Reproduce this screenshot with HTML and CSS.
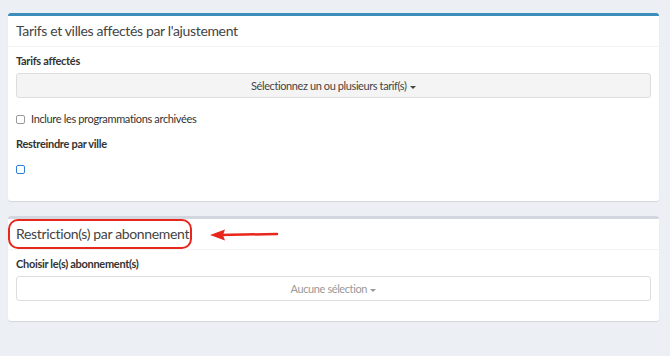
FILE: index.html
```html
<!DOCTYPE html>
<html lang="fr">
<head>
    <meta charset="UTF-8" />
    <title>Ajustement</title>
    <link rel="stylesheet" href="styles.css">
</head>
<body>
    <div class="box box-primary">
        <div class="box-header">
            <h3 class="box-title">Tarifs et villes affectés par l'ajustement</h3>
        </div>
        <div class="box-body">
            <div class="form-group">
                <label class="control-label">Tarifs affectés</label>
                <div class="picker picker-filled">Sélectionnez un ou plusieurs tarif(s) <span class="caret"></span></div>
            </div>
            <div class="check-row">
                <span class="check"></span>
                <span>Inclure les programmations archivées</span>
            </div>
            <div class="form-group">
                <label class="control-label">Restreindre par ville</label>
                <div class="check-wrap"><span class="check check-focus"></span></div>
            </div>
        </div>
    </div>

    <div class="box box-default">
        <div class="box-header">
            <h3 class="box-title">Restriction(s) par abonnement</h3>
            <span class="annot-ring"></span>
            <svg class="annot-arrow" width="70" height="14" viewBox="0 0 70 14">
                <line x1="10" y1="7" x2="68" y2="6" stroke="#e8271c" stroke-width="2.5" stroke-linecap="round"/>
                <polygon points="1,7 16,1.5 14,7 16,12.5" fill="#e8271c"/>
            </svg>
        </div>
        <div class="box-body">
            <div class="form-group">
                <label class="control-label">Choisir le(s) abonnement(s)</label>
                <div class="picker picker-muted">Aucune sélection <span class="caret"></span></div>
            </div>
        </div>
    </div>
</body>
</html>
```

FILE: styles.css
```css
body {
    font-family: Lato, "Liberation Sans", sans-serif;
    background-color: #ecf0f5;
    color: #333;
    margin: 0;
    padding: 13px 11px 0 8px;
}
.box {
    background-color: #ffffff;
    border-top: 3px solid #d2d6de;
    border-radius: 3px;
    box-shadow: 0 1px 1px rgba(0, 0, 0, 0.1);
    margin-bottom: 15px;
}
.box-primary {
    border-top-color: #3c8dbc;
}
.box-header {
    position: relative;
    padding: 6px 8px 7px;
    border-bottom: 1px solid #f4f4f4;
}
.box-title {
    margin: 0;
    font-size: 14px;
    font-weight: normal;
    letter-spacing: -0.35px;
    line-height: 17px;
    color: #444;
}
.box-body {
    padding: 6px 8px 8px;
}
.form-group {
    margin-bottom: 12px;
}
.control-label {
    display: block;
    font-size: 11px;
    font-weight: bold;
    letter-spacing: -0.3px;
    line-height: 16px;
    margin-bottom: 4px;
}
.picker {
    height: 23px;
    border: 1px solid #ddd;
    border-radius: 3px;
    font-size: 11px;
    letter-spacing: -0.4px;
    line-height: 23px;
    text-align: center;
}
.picker-filled {
    background-color: #f4f4f4;
    color: #444;
}
.picker-muted {
    background-color: #fff;
    color: #999;
}
.caret {
    display: inline-block;
    width: 0;
    height: 0;
    margin-left: 1px;
    vertical-align: middle;
    border-top: 3px solid currentColor;
    border-left: 3px solid transparent;
    border-right: 3px solid transparent;
}
.check-row {
    display: flex;
    align-items: center;
    gap: 6px;
    font-size: 11px;
    letter-spacing: -0.35px;
    line-height: 18px;
    color: #333;
    margin-bottom: 8px;
}
.check {
    display: inline-block;
    width: 7px;
    height: 7px;
    border: 1px solid #999;
    border-radius: 2px;
    background: #fff;
}
.check-wrap {
    display: flex;
    align-items: center;
    height: 16px;
    margin-top: 9px;
    padding-bottom: 4px;
}
.check-focus {
    border: 1.5px solid #2f7fdb;
}
.annot-ring {
    position: absolute;
    left: 0;
    top: 0;
    width: 180px;
    height: 26px;
    border: 2.5px solid #e8271c;
    border-radius: 10px;
}
.annot-arrow {
    position: absolute;
    left: 201px;
    top: 9px;
}
```
